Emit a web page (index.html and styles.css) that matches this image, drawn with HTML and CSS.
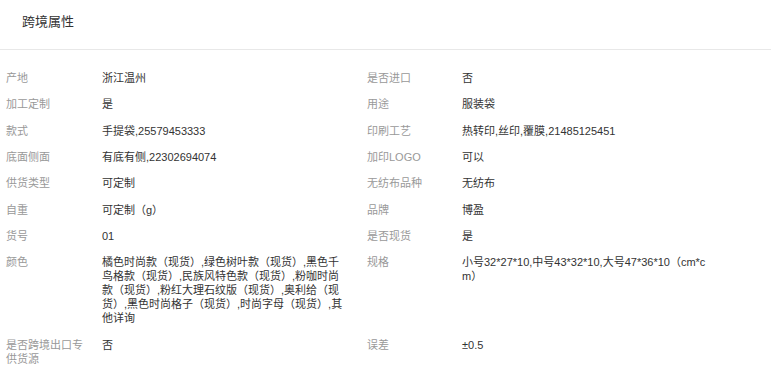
FILE: index.html
```html
<!DOCTYPE html>
<html lang="zh-CN">
<head>
<meta charset="utf-8">
<title>跨境属性</title>
<link rel="stylesheet" href="styles.css">
</head>
<body>
<section class="panel">
  <header class="panel-head">
    <h2 class="panel-title">跨境属性</h2>
  </header>
  <div class="props">
    <div class="row">
      <div class="label">产地</div><div class="val">浙江温州</div>
      <div class="label">是否进口</div><div class="val">否</div>
    </div>
    <div class="row">
      <div class="label">加工定制</div><div class="val">是</div>
      <div class="label">用途</div><div class="val">服装袋</div>
    </div>
    <div class="row">
      <div class="label">款式</div><div class="val">手提袋,25579453333</div>
      <div class="label">印刷工艺</div><div class="val">热转印,丝印,覆膜,21485125451</div>
    </div>
    <div class="row">
      <div class="label">底面侧面</div><div class="val">有底有侧,22302694074</div>
      <div class="label">加印LOGO</div><div class="val">可以</div>
    </div>
    <div class="row">
      <div class="label">供货类型</div><div class="val">可定制</div>
      <div class="label">无纺布品种</div><div class="val">无纺布</div>
    </div>
    <div class="row">
      <div class="label">自重</div><div class="val">可定制（g）</div>
      <div class="label">品牌</div><div class="val">博盈</div>
    </div>
    <div class="row">
      <div class="label">货号</div><div class="val">01</div>
      <div class="label">是否现货</div><div class="val">是</div>
    </div>
    <div class="row">
      <div class="label">颜色</div><div class="val">橘色时尚款（现货）,绿色树叶款（现货）,黑色千鸟格款（现货）,民族风特色款（现货）,粉咖时尚款（现货）,粉红大理石纹版（现货）,奥利给（现货）,黑色时尚格子（现货）,时尚字母（现货）,其他详询</div>
      <div class="label">规格</div><div class="val">小号32*27*10,中号43*32*10,大号47*36*10（cm*cm）</div>
    </div>
    <div class="row">
      <div class="label">是否跨境出口专供货源</div><div class="val">否</div>
      <div class="label">误差</div><div class="val">±0.5</div>
    </div>
  </div>
</section>
</body>
</html>
```

FILE: styles.css
```css
html, body {
  margin: 0;
  padding: 0;
  background: #fff;
}

body {
  font-family: "Liberation Sans", "Noto Sans CJK SC", sans-serif;
  color: #333;
}

.panel-head {
  padding: 13px 22px 18px;
  border-bottom: 1px solid #e8e8e8;
}

.panel-title {
  margin: 0;
  font-size: 13px;
  font-weight: normal;
  line-height: 18px;
  color: #333;
}

.props {
  display: flex;
  flex-direction: column;
  gap: 12.34px;
  padding: 21px 0 0 6px;
  font-size: 11px;
  line-height: 14px;
}

.row {
  display: grid;
  grid-template-columns: 96px 245px 95px 245px;
  column-gap: 0;
}

.row > .val:nth-child(2) {
  margin-right: 20px;
}

.row {
  grid-template-columns: 96px 265px 95px 245px;
}

.label {
  color: #999;
  padding-right: 12px;
}

.val {
  color: #333;
  word-break: break-all;
}
```
